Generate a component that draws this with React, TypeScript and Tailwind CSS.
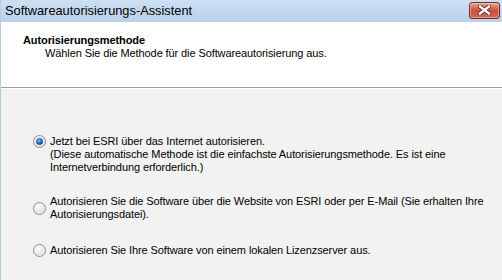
import React from 'react';

function Radio({ checked }: { checked?: boolean }) {
  return (
    <svg width="13" height="13" viewBox="0 0 13 13" className="shrink-0">
      <defs>
        <radialGradient id={checked ? 'rbg1' : 'rbg0'} cx="0.4" cy="0.35" r="0.7">
          <stop offset="0" stopColor="#ffffff" />
          <stop offset="1" stopColor="#d6d6d6" />
        </radialGradient>
        <radialGradient id="dot" cx="0.4" cy="0.35" r="0.7">
          <stop offset="0" stopColor="#7ec3f5" />
          <stop offset="0.6" stopColor="#1c6fc4" />
          <stop offset="1" stopColor="#0d3e7a" />
        </radialGradient>
      </defs>
      <circle cx="6.5" cy="6.5" r="6" fill={`url(#${checked ? 'rbg1' : 'rbg0'})`} stroke="#8e8f8f" strokeWidth="1" />
      <circle cx="6.5" cy="6.5" r="4.6" fill="none" stroke="#f4f4f4" strokeWidth="0.8" />
      {checked && <circle cx="6.5" cy="6.5" r="3.2" fill="url(#dot)" stroke="#1a4f8c" strokeWidth="0.5" />}
    </svg>
  );
}

export default function App() {
  const ui = { fontFamily: '"Liberation Sans", Arial, sans-serif' };
  return (
    <div className="flex h-[280px] w-[502px] flex-col overflow-hidden border-l border-[#b4cbe6] text-[11px] leading-[13px] tracking-[-0.1px] text-black" style={ui}>
      <div className="flex h-[22px] shrink-0 items-center justify-between bg-gradient-to-b from-[#cddff2] to-[#b9d1ea] pl-[4px] pr-[2px]">
        <span className="text-[12.8px] leading-[14px] tracking-normal text-black">Softwareautorisierungs-Assistent</span>
        <div className="mt-[-2px] flex h-[17px] w-[31px] items-center justify-center rounded-[3px] border border-[#7a2a1e] bg-gradient-to-b from-[#e5a595] via-[#c8503c] to-[#d26a55] shadow-[inset_0_0_0_1px_rgba(255,255,255,0.35)]">
          <svg width="13" height="10" viewBox="0 0 13 10">
            <path d="M2 1.5 L11 8.5 M11 1.5 L2 8.5" stroke="#5a2018" strokeWidth="4" strokeLinecap="square" />
            <path d="M2 1.5 L11 8.5 M11 1.5 L2 8.5" stroke="#ffffff" strokeWidth="2.4" strokeLinecap="square" />
          </svg>
        </div>
      </div>

      <div className="flex h-[65px] shrink-0 flex-col bg-white pl-[22px] pt-[12px]">
        <div className="font-bold">Autorisierungsmethode</div>
        <div className="pl-[22px]">Wählen Sie die Methode für die Softwareautorisierung aus.</div>
      </div>
      <div className="h-px shrink-0 bg-[#a0a0a0]" />
      <div className="h-px shrink-0 bg-white" />

      <div className="flex flex-1 flex-col bg-[#f2f2f2] pl-[32px] pt-[46px]">
        <div className="flex items-start gap-[4px]">
          <Radio checked />
          <div>
            <div>Jetzt bei ESRI über das Internet autorisieren.</div>
            <div>
              (Diese automatische Methode ist die einfachste Autorisierungsmethode. Es ist eine
              <br />
              Internetverbindung erforderlich.)
            </div>
          </div>
        </div>

        <div className="mt-[21px] flex items-center gap-[4px]">
          <Radio />
          <div>
            Autorisieren Sie die Software über die Website von ESRI oder per E-Mail (Sie erhalten Ihre
            <br />
            Autorisierungsdatei).
          </div>
        </div>

        <div className="mt-[23px] flex items-center gap-[4px]">
          <Radio />
          <div>Autorisieren Sie Ihre Software von einem lokalen Lizenzserver aus.</div>
        </div>
      </div>
    </div>
  );
}
